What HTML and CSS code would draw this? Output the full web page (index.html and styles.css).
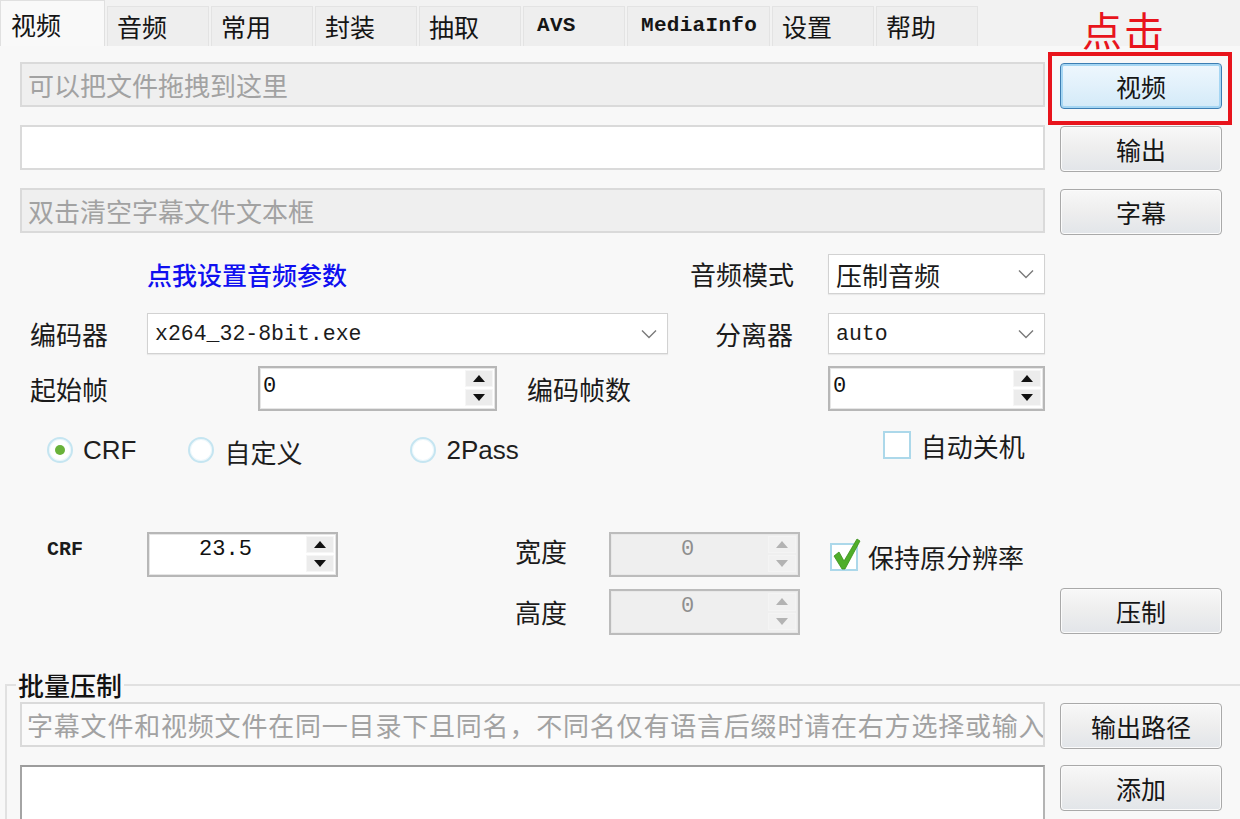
FILE: index.html
```html
<!DOCTYPE html>
<html lang="zh-CN">
<head>
<meta charset="utf-8">
<title>小丸工具箱</title>
<link rel="stylesheet" href="styles.css">
</head>
<body>
<div class="window">
  <div class="tabbar">
    <div class="tab active">视频</div>
    <div class="tab">音频</div>
    <div class="tab">常用</div>
    <div class="tab">封装</div>
    <div class="tab">抽取</div>
    <div class="tab mono">AVS</div>
    <div class="tab mono wide">MediaInfo</div>
    <div class="tab">设置</div>
    <div class="tab">帮助</div>
  </div>

  <div class="note">点击</div>
  <div class="highlight"></div>

  <div class="files">
    <div class="file-row">
      <div class="field disabled">可以把文件拖拽到这里</div>
      <button class="btn focus">视频</button>
    </div>
    <div class="file-row">
      <div class="field"></div>
      <button class="btn">输出</button>
    </div>
    <div class="file-row">
      <div class="field disabled">双击清空字幕文件文本框</div>
      <button class="btn">字幕</button>
    </div>
  </div>

  <div class="row row-a">
    <a class="link">点我设置音频参数</a>
    <span class="lbl lbl-mode">音频模式</span>
    <div class="combo combo-r"><span class="combo-text">压制音频</span><svg class="chev" width="16" height="10" viewBox="0 0 16 10"><polyline points="1,1.5 8,8.5 15,1.5" fill="none" stroke="#7a7a7a" stroke-width="1.4"/></svg></div>
  </div>

  <div class="row row-b">
    <span class="lbl lbl-enc">编码器</span>
    <div class="combo combo-enc"><span class="combo-text mono-t">x264_32-8bit.exe</span><svg class="chev" width="16" height="10" viewBox="0 0 16 10"><polyline points="1,1.5 8,8.5 15,1.5" fill="none" stroke="#7a7a7a" stroke-width="1.4"/></svg></div>
    <span class="lbl lbl-split">分离器</span>
    <div class="combo combo-r"><span class="combo-text mono-t">auto</span><svg class="chev" width="16" height="10" viewBox="0 0 16 10"><polyline points="1,1.5 8,8.5 15,1.5" fill="none" stroke="#7a7a7a" stroke-width="1.4"/></svg></div>
  </div>

  <div class="row row-c">
    <span class="lbl lbl-start">起始帧</span>
    <div class="spin spin-start"><span class="spin-val">0</span><div class="spin-btns"><span class="sb up"></span><span class="sb down"></span></div></div>
    <span class="lbl lbl-count">编码帧数</span>
    <div class="spin spin-count"><span class="spin-val">0</span><div class="spin-btns"><span class="sb up"></span><span class="sb down"></span></div></div>
  </div>

  <div class="row row-d">
    <label class="radio r-crf"><span class="rc checked"></span><span class="rl">CRF</span></label>
    <label class="radio r-custom"><span class="rc"></span><span class="rl cjk">自定义</span></label>
    <label class="radio r-2pass"><span class="rc"></span><span class="rl">2Pass</span></label>
    <label class="check c-off"><span class="cb"></span><span class="cl">自动关机</span></label>
  </div>

  <div class="row row-e">
    <span class="lbl lbl-crf">CRF</span>
    <div class="spin spin-crf"><span class="spin-val center">23.5</span><div class="spin-btns"><span class="sb up"></span><span class="sb down"></span></div></div>
    <span class="lbl lbl-w">宽度</span>
    <div class="spin spin-dim disabled"><span class="spin-val center">0</span><div class="spin-btns"><span class="sb up"></span><span class="sb down"></span></div></div>
    <label class="check c-keep"><span class="cb"><svg class="tick" width="30" height="34" viewBox="0 0 30 34"><path d="M2 19 L7 15 L12 24 L25 2 L28 4 L13 32 L10 32 Z" fill="#4fae2a" stroke="#3a8f1b" stroke-width="0.8"/></svg></span><span class="cl">保持原分辨率</span></label>
  </div>

  <div class="row row-f">
    <span class="lbl lbl-h">高度</span>
    <div class="spin spin-dim disabled"><span class="spin-val center">0</span><div class="spin-btns"><span class="sb up"></span><span class="sb down"></span></div></div>
    <button class="btn btn-encode">压制</button>
  </div>

  <fieldset class="group">
    <legend>批量压制</legend>
    <div class="file-row g-row">
      <div class="field soft">字幕文件和视频文件在同一目录下且同名，不同名仅有语言后缀时请在右方选择或输入</div>
      <button class="btn">输出路径</button>
    </div>
    <div class="file-row g-row2">
      <div class="listbox"></div>
      <button class="btn">添加</button>
    </div>
  </fieldset>
</div>
</body>
</html>
```

FILE: styles.css
```css
* { box-sizing: border-box; }

html, body {
  margin: 0;
  padding: 0;
  width: 1240px;
  height: 819px;
  overflow: hidden;
  background: #f8f8f8;
}

body {
  font-family: "Noto Sans CJK SC", "Noto Sans", sans-serif;
  font-size: 26px;
  color: #1b1b1b;
}

.window {
  position: relative;
  width: 1240px;
  height: 819px;
  overflow: hidden;
}

/* ---------- tabs ---------- */
.tabbar {
  display: flex;
  align-items: flex-end;
  height: 46px;
  background: #f2f2f2;
}

.tab {
  width: 102px;
  height: 40px;
  margin-left: 2px;
  padding-left: 9px;
  background: #eeeeee;
  border: 1px solid #e3e3e3;
  border-bottom: none;
  font-size: 25px;
  line-height: 38px;
  color: #151515;
  white-space: nowrap;
}

.tab.active {
  width: 105px;
  height: 46px;
  margin-left: 0;
  padding-left: 10px;
  background: #f9f9f9;
  border-color: #e0e0e0;
  line-height: 46px;
}

.tab.mono {
  font-family: "Liberation Mono", monospace;
  font-size: 21px;
  font-weight: bold;
  padding-left: 13px;
  letter-spacing: 0.3px;
}

.tab.wide { width: 143px; }

/* ---------- overlay annotation ---------- */
.note {
  position: absolute;
  left: 1082px;
  top: 0;
  font-size: 40px;
  line-height: 58px;
  color: #e8141c;
  letter-spacing: 2px;
}

.highlight {
  position: absolute;
  left: 1048px;
  top: 52px;
  width: 184px;
  height: 73px;
  border: 4px solid #e8141c;
  pointer-events: none;
}

/* ---------- file rows ---------- */
.files {
  display: flex;
  flex-direction: column;
  gap: 18px;
  margin-top: 16px;
  padding-left: 20px;
}

.file-row {
  display: flex;
  align-items: flex-start;
  gap: 15px;
  height: 45px;
}

.field {
  width: 1025px;
  height: 45px;
  background: #ffffff;
  border: 2px solid #dadada;
  padding-left: 6px;
  line-height: 42px;
  color: #a2a2a2;
  white-space: nowrap;
  overflow: hidden;
}

.field.disabled { background: #efefef; }
.field.soft { background: #fafafa; letter-spacing: 0.8px; padding-left: 5px; }

.btn {
  flex: none;
  width: 162px;
  height: 46px;
  margin-top: 1px;
  padding: 0;
  border: 1px solid #a9a9a9;
  border-radius: 4px;
  background: linear-gradient(#f8f8f8 0%, #eeeeee 48%, #e2e5e9 100%);
  box-shadow: inset 0 0 0 1px #fbfbfb;
  font-family: "Noto Sans CJK SC", sans-serif;
  font-size: 25px;
  color: #161616;
  line-height: 42px;
}

.btn.focus {
  border-color: #3c7eb3;
  background: linear-gradient(#eef7fd 0%, #e2f1fb 48%, #d3eaf8 100%);
  box-shadow: inset 0 0 0 2px #a5d6f3;
}

/* ---------- form rows ---------- */
.row {
  display: flex;
  align-items: center;
}

.lbl { white-space: nowrap; line-height: 30px; }

.row-a { margin-top: 21px; height: 40px; }
.row-b { margin-top: 19px; height: 41px; }
.row-c { margin-top: 12px; height: 45px; }
.row-d { margin-top: 19px; height: 40px; }
.row-e { margin-top: 62px; height: 45px; }
.row-f { margin-top: 12px; height: 46px; }

.link {
  margin-left: 147px;
  width: 543px;
  color: #1010f0;
  font-weight: 500;
  font-size: 25px;
  cursor: pointer;
}

.lbl-mode { width: 103px; text-align: right; }

.combo {
  position: relative;
  height: 100%;
  background: #ffffff;
  border: 1px solid #d2d2d2;
  box-shadow: 0 1px 1px rgba(0,0,0,0.06);
  display: flex;
  align-items: center;
  padding-left: 7px;
}

.combo-r { margin-left: 35px; width: 217px; }
.combo-enc { width: 521px; }

.combo-text { white-space: nowrap; }
.mono-t {
  font-family: "Liberation Mono", monospace;
  font-size: 21.5px;
  color: #1b1b1b;
}

.chev {
  margin-left: auto;
  margin-right: 10px;
}

.lbl-enc { margin-left: 30px; width: 117px; }
.lbl-split { width: 125px; text-align: right; }
.lbl-start { margin-left: 30px; width: 228px; }
.lbl-count { margin-left: 30px; width: 301px; }

/* ---------- spin boxes ---------- */
.spin {
  height: 100%;
  display: flex;
  align-items: stretch;
  background: #ffffff;
  border: 2px solid #b7b7b7;
  box-shadow: inset 0 0 0 1px #e6e6e6;
}

.spin-start { width: 239px; }
.spin-count { width: 217px; }
.spin-crf { width: 191px; }
.spin-dim { width: 191px; }

.spin-val {
  flex: 1;
  padding-left: 3px;
  font-family: "Liberation Mono", monospace;
  font-size: 22px;
  line-height: 38px;
  color: #111;
}

.spin-val.center { text-align: center; padding-left: 0; padding-right: 4px; line-height: 32px; }

.spin-btns {
  width: 30px;
  display: flex;
  flex-direction: column;
  gap: 2px;
  padding: 2px 2px 3px 0;
}

.sb {
  flex: 1;
  background: #ececec;
  border: 1px solid #f6f6f6;
  display: flex;
  align-items: center;
  justify-content: center;
}

.sb::after {
  content: "";
  width: 0;
  height: 0;
  border-left: 6px solid transparent;
  border-right: 6px solid transparent;
}

.sb.up::after { border-bottom: 7px solid #111; }
.sb.down::after { border-top: 7px solid #111; }

.spin.disabled {
  background: #efefef;
  border-color: #bcbcbc;
  box-shadow: inset 0 0 0 1px #e8e8e8;
}
.spin.disabled .spin-val { color: #8e8e8e; }
.spin.disabled .sb { background: #f1f1f1; border-color: #f4f4f4; }
.spin.disabled .sb.up::after { border-bottom-color: #b3b3b3; }
.spin.disabled .sb.down::after { border-top-color: #b3b3b3; }

/* ---------- radios & checks ---------- */
.radio, .check {
  display: flex;
  align-items: center;
  white-space: nowrap;
}

.r-crf { margin-left: 47px; }
.r-custom { margin-left: 52px; }
.r-2pass { margin-left: 108px; }
.c-off { margin-left: 364px; margin-top: -10px; }

.rc {
  width: 26px;
  height: 26px;
  border-radius: 50%;
  background: #ffffff;
  border: 2px solid #c5e5f1;
  box-shadow: inset 0 0 0 1px #eef7fb;
  display: flex;
  align-items: center;
  justify-content: center;
}

.rc.checked::after {
  content: "";
  width: 10px;
  height: 10px;
  border-radius: 50%;
  background: #69b23a;
}

.rl {
  margin-left: 10px;
  font-family: "Liberation Sans", "Noto Sans CJK SC", sans-serif;
  font-size: 26px;
  color: #1e1e1e;
}

.rl.cjk {
  font-family: "Noto Sans CJK SC", sans-serif;
  margin-top: 2px;
}

.cb {
  position: relative;
  width: 28px;
  height: 28px;
  background: #ffffff;
  border: 2px solid #acd8ea;
}

.tick {
  position: absolute;
  left: 0;
  top: -8px;
}

.cl { margin-left: 10px; }

/* row e/f */
.lbl-crf {
  margin-left: 47px;
  width: 100px;
  font-family: "Liberation Mono", monospace;
  font-weight: bold;
  font-size: 20px;
  margin-top: -10px;
}

.lbl-w { margin-left: 177px; width: 94px; margin-top: -8px; }
.lbl-h { margin-left: 515px; width: 94px; }

.c-keep { margin-left: 30px; margin-top: 4px; }

.btn-encode { margin-left: 260px; margin-top: -2px; }

/* ---------- group box ---------- */
.group {
  margin: 35px 0 0 5px;
  padding: 0 0 0 13px;
  border: 2px solid #e1e1e1;
  border-right: none;
  border-bottom: none;
  min-width: 0;
  height: 149px;
}

.group legend {
  margin-left: -4px;
  padding: 0 2px;
  font-size: 26px;
  line-height: 30px;
  color: #121212;
  font-weight: 500;
}

.g-row { margin-top: 2px; }
.g-row2 { margin-top: 18px; }

.listbox {
  width: 1025px;
  height: 54px;
  background: #ffffff;
  border: 2px solid #b4b4b4;
  border-top-color: #9c9c9c;
  border-left-color: #a4a4a4;
  border-bottom: none;
}

.g-row2 .btn { margin-top: 0; }
```
